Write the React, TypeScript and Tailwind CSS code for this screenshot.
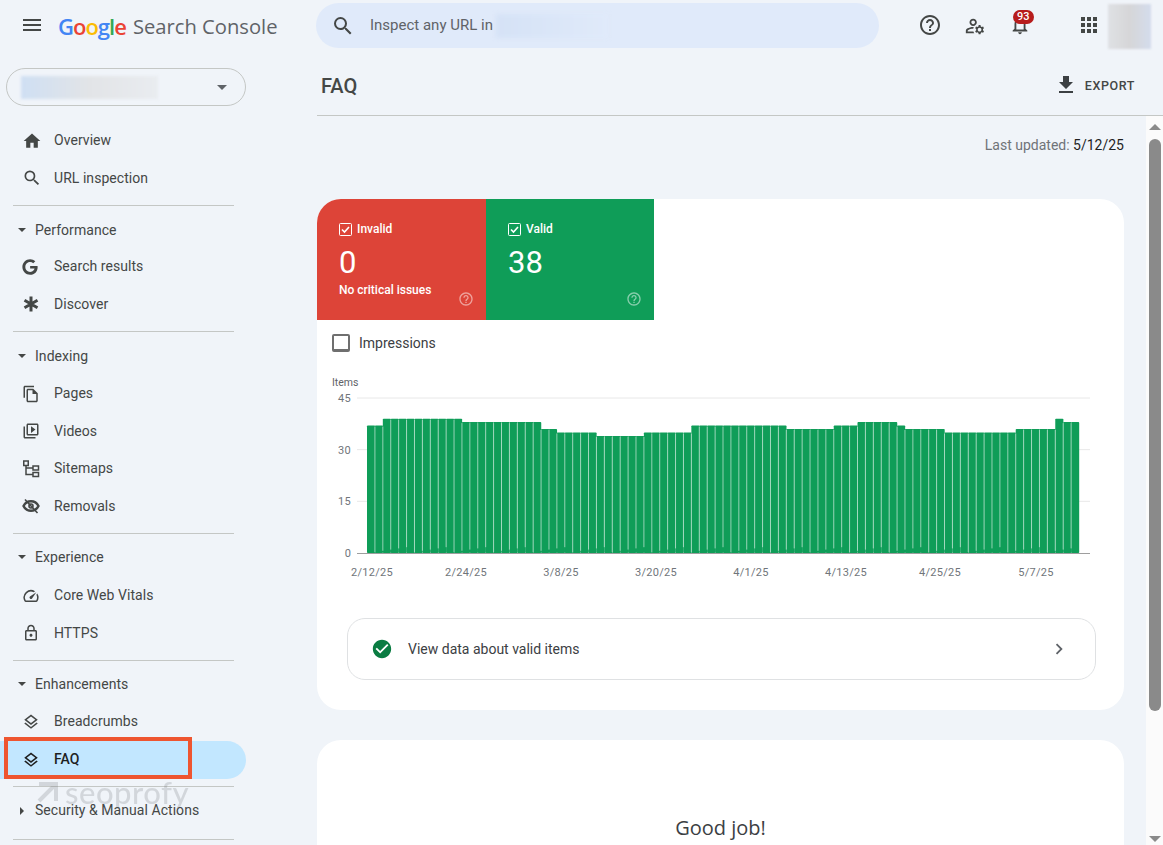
import type { ReactNode } from "react";
import {
  MdApps,
  MdCheckCircle,
  MdChevronRight,
  MdFileDownload,
  MdHelpOutline,
  MdHome,
  MdMenu,
  MdOutlineFileCopy,
  MdOutlineLayers,
  MdOutlineLock,
  MdOutlineManageAccounts,
  MdOutlineNotifications,
  MdOutlineSpeed,
  MdOutlineVideoLibrary,
  MdSearch,
} from "react-icons/md";
import { FaGoogle } from "react-icons/fa";

// value, how many days in a row
const runs: [number, number][] = [
  [37, 2], [39, 10], [38, 10], [36, 2], [35, 5], [34, 6], [35, 6], [37, 12], [36, 6],
  [37, 3], [38, 5], [37, 1], [36, 5], [35, 9], [36, 5], [39, 1], [38, 2],
];
const days = runs.flatMap(([v, n]) => Array.from({ length: n }, () => v));

const xLabels: [string, number][] = [
  ["2/12/25", 372], ["2/24/25", 466], ["3/8/25", 561], ["3/20/25", 656],
  ["4/1/25", 751], ["4/13/25", 846], ["4/25/25", 940], ["5/7/25", 1036],
];

function SitemapIcon() {
  return (
    <svg width="18" height="18" viewBox="0 0 18 18" fill="none" stroke="currentColor" strokeWidth="1.5">
      <rect x="1.75" y="1" width="4.5" height="4.5" />
      <rect x="11" y="6" width="5.5" height="4" />
      <rect x="11" y="12.5" width="5.5" height="4" />
      <path d="M4 5.5V14.5H11M4 8H11" />
    </svg>
  );
}

function DiscoverIcon() {
  return (
    <svg width="18" height="18" viewBox="0 0 18 18" fill="none" stroke="currentColor" strokeWidth="3">
      <path d="M9 1.5V16.5M2.5 5.2L15.5 12.8M15.5 5.2L2.5 12.8" />
    </svg>
  );
}

function RemovalsIcon() {
  return (
    <svg width="18" height="18" viewBox="0 0 18 18" fill="none" stroke="currentColor">
      <path d="M1.5 9C3.2 5.8 5.8 4.2 9 4.2S14.8 5.8 16.5 9C14.8 12.2 12.2 13.8 9 13.8S3.2 12.2 1.5 9Z" strokeWidth="2.4" />
      <circle cx="9" cy="9" r="2" strokeWidth="1.6" />
      <path d="M3 2.5L15.5 16" strokeWidth="1.6" />
    </svg>
  );
}

function NavItem({ icon, label }: { icon: ReactNode; label: string }) {
  return (
    <div className="flex h-[37.5px] items-center pl-[22px] text-[14px] tracking-[0.05px] text-[#444746]">
      <span className="flex w-[32px] items-center text-[#444746]">{icon}</span>
      {label}
    </div>
  );
}

function Section({ label, open = true }: { label: string; open?: boolean }) {
  return (
    <div className="flex h-[24px] items-center text-[14px] tracking-[0.05px] text-[#444746]">
      <span className="flex w-[35px] justify-center pl-[9px]">
        {open ? (
          <span className="h-0 w-0 border-x-[4px] border-t-[4px] border-x-transparent border-t-[#444746]" />
        ) : (
          <span className="h-0 w-0 border-y-[4px] border-l-[4px] border-y-transparent border-l-[#444746]" />
        )}
      </span>
      {label}
    </div>
  );
}

function Divider({ tight = false }: { tight?: boolean }) {
  return <div className={`ml-[13px] mt-[8px] h-px w-[221px] bg-[#c4c7c5] ${tight ? "mb-[11px]" : "mb-[12px]"}`} />;
}

function Sidebar() {
  return (
    <aside className="relative w-[317px] shrink-0">
      <div className="ml-[6px] mt-[18px] flex h-[38px] w-[240px] items-center justify-between rounded-full border border-[#c4c7c5] pl-[14px] pr-[18px]">
        <div className="h-[23px] w-[137px] bg-gradient-to-r from-[#cfdff3] via-[#e2e4e7] to-[#e9ecf0] blur-[1.5px]" />
        <span className="h-0 w-0 border-x-[5px] border-t-[5px] border-x-transparent border-t-[#5f6368]" />
      </div>
      <nav className="mt-[16px]">
        <NavItem icon={<MdHome size={20} />} label="Overview" />
        <NavItem icon={<MdSearch size={20} />} label="URL inspection" />
        <Divider />
        <Section label="Performance" />
        <div className="h-[6px]" />
        <NavItem icon={<FaGoogle size={16} />} label="Search results" />
        <NavItem icon={<DiscoverIcon />} label="Discover" />
        <Divider />
        <Section label="Indexing" />
        <div className="h-[7px]" />
        <NavItem icon={<MdOutlineFileCopy size={18} />} label="Pages" />
        <NavItem icon={<MdOutlineVideoLibrary size={18} />} label="Videos" />
        <NavItem icon={<SitemapIcon />} label="Sitemaps" />
        <NavItem icon={<RemovalsIcon />} label="Removals" />
        <Divider tight />
        <Section label="Experience" />
        <div className="h-[8px]" />
        <NavItem icon={<MdOutlineSpeed size={18} />} label="Core Web Vitals" />
        <NavItem icon={<MdOutlineLock size={18} />} label="HTTPS" />
        <Divider tight />
        <Section label="Enhancements" />
        <div className="h-[7px]" />
        <NavItem icon={<MdOutlineLayers size={18} />} label="Breadcrumbs" />
        <div className="relative h-[38px] w-[246px] rounded-r-full bg-[#c2e7ff]">
          <div className="flex h-full items-center pl-[22px] text-[14px] font-medium text-[#1f1f1f]">
            <span className="flex w-[32px] items-center"><MdOutlineLayers size={18} /></span>
            FAQ
          </div>
          <div className="absolute left-[4px] top-[-4px] h-[42px] w-[188px] border-[4px] border-[#ee5530]" />
        </div>
        <div className="-mt-px">
          <Divider />
        </div>
        <Section label="Security & Manual Actions" open={false} />
        <div className="h-[8px]" />
        <Divider />
      </nav>
      {/* watermark over the nav */}
      <div className="absolute left-[36px] top-[727px] flex items-center gap-[6px] text-[31px] leading-[30px] font-medium tracking-[0.5px] text-[#5f6368] opacity-20">
        <svg width="23" height="23" viewBox="0 0 23 23" fill="none" stroke="currentColor" strokeWidth="4">
          <path d="M3 3H20V20M20 3L3 20" />
        </svg>
        <span className="font-['Lato',sans-serif]">seoprofy</span>
      </div>
    </aside>
  );
}

function Topbar() {
  return (
    <header className="flex h-[50px] items-center">
      <div className="flex w-[316px] shrink-0 items-center pl-[20px]">
        <MdMenu size={24} className="text-[#444746]" />
        <span className="ml-[14px] mt-[2px] font-['Open_Sans',sans-serif] text-[22px] leading-none font-semibold tracking-[-1px]">
          <span className="text-[#4285f4]">G</span>
          <span className="text-[#ea4335]">o</span>
          <span className="text-[#fbbc05]">o</span>
          <span className="text-[#4285f4]">g</span>
          <span className="text-[#34a853]">l</span>
          <span className="text-[#ea4335]">e</span>
        </span>
        <span className="ml-[7px] mt-[2px] font-['Open_Sans',sans-serif] text-[20.2px] leading-none text-[#5f6368]">Search Console</span>
      </div>
      <div className="mt-[1px] flex h-[45px] w-[563px] items-center rounded-full bg-[#e0eafa] pl-[15px]">
        <MdSearch size={24} className="text-[#444746]" />
        <span className="ml-[15px] text-[15px] text-[#5f6368]">Inspect any URL in</span>
        <div className="ml-[3px] h-[24px] w-[112px] bg-gradient-to-r from-[#d5e2f6] to-[#e0eafa] blur-[2px]" />
      </div>
      <div className="ml-[39px] flex items-center text-[#444746]">
        <MdHelpOutline size={24} />
        <MdOutlineManageAccounts size={22} className="ml-[22px] mt-[2px]" />
        <div className="relative ml-[23px]">
          <MdOutlineNotifications size={22} />
          <span className="absolute left-[4px] top-[-4px] rounded-full bg-[#b71c1c] px-[4px] text-[11px] leading-[14px] font-medium text-white">93</span>
        </div>
        <MdApps size={24} className="ml-[46px]" />
        <div className="ml-[7px] mt-[3px] h-[45px] w-[43px] bg-gradient-to-r from-[#dfe1e4] via-[#d6d6d8] to-[#d4dcec] blur-[1px]" />
      </div>
    </header>
  );
}

function Tile({ label, value, note, bg }: { label: string; value: string; note?: string; bg: string }) {
  return (
    <div className={`relative h-[121px] px-[22px] pt-[22px] text-white ${bg}`}>
      <div className="flex items-center gap-[5px] text-[12px] leading-[16px] font-medium">
        <svg width="13" height="13" viewBox="0 0 13 13" fill="none" stroke="white">
          <rect x="0.5" y="0.5" width="12" height="12" rx="1" />
          <path d="M3 6.5L5.5 9L10 4" strokeWidth="1.6" />
        </svg>
        {label}
      </div>
      <div className="mt-[6px] text-[31px] leading-[40px]">{value}</div>
      {note && <div className="mt-[-1px] text-[12px] leading-[16px] font-medium">{note}</div>}
      <MdHelpOutline size={16} className="absolute right-[12px] bottom-[13px] text-white opacity-50" />
    </div>
  );
}

function Chart() {
  const pitch = 712 / days.length;
  const y = (v: number) => 553 - (v * 155) / 45;
  return (
    <svg className="block" width="807" height="215" viewBox="317 372 807 215">
      <text x="332" y="386" fontSize="10.5" fill="#5f6368">Items</text>
      {[45, 30, 15].map((v) => (
        <g key={v}>
          <line x1="357" x2="1090" y1={y(v)} y2={y(v)} stroke="#e8e8e8" />
          <text x="351" y={y(v) + 4} textAnchor="end" fontSize="11" letterSpacing="0.3" fill="#70757a">{v}</text>
        </g>
      ))}
      <text x="351" y="557" textAnchor="end" fontSize="11" fill="#70757a">0</text>
      {days.map((v, i) => (
        <rect key={i} x={367 + i * pitch} y={y(v)} width={pitch + 0.2} height={553 - y(v)} rx="0.8" fill="#0f9d58" />
      ))}
      {days.slice(1).map((v, i) => (
        <rect
          key={i}
          x={367 + (i + 1) * pitch - 0.5}
          y={Math.max(y(v), y(days[i])) + 1}
          width="1"
          height={553 - Math.max(y(v), y(days[i])) - 2 - (i % 5) * 1.2}
          fill="#ffffff"
          opacity="0.55"
        />
      ))}
      <line x1="357" x2="1090" y1="553.5" y2="553.5" stroke="#9e9e9e" />
      {xLabels.map(([t, x]) => (
        <text key={t} x={x} y="576" textAnchor="middle" fontSize="11" letterSpacing="0.3" fill="#70757a">{t}</text>
      ))}
    </svg>
  );
}

function Scrollbar() {
  return (
    <div className="flex w-[17px] shrink-0 flex-col items-center bg-[#fbfbfb]">
      <span className="mt-[8px] h-0 w-0 border-x-[6px] border-b-[6px] border-x-transparent border-b-[#8a8a8a]" />
      <div className="mt-[9px] ml-[1px] h-[572px] w-[12px] rounded-full bg-[#8a8a8a]" />
      <span className="mt-auto mb-[3px] h-0 w-0 border-x-[6px] border-t-[6px] border-x-transparent border-t-[#8a8a8a]" />
    </div>
  );
}

export default function App() {
  return (
    <div className="h-[845px] w-[1163px] overflow-hidden bg-[#f0f4f9] font-['Roboto',sans-serif]">
      <Topbar />
      <div className="flex h-[795px]">
        <Sidebar />
        <main className="flex min-w-0 flex-1 flex-col">
          <div className="flex h-[66px] shrink-0 items-center justify-between border-b border-[#c4c7c5] pr-[28px] pt-[7px]">
            <h1 className="pl-[4px] text-[20px] font-medium text-[#444746]">FAQ</h1>
            <div className="flex items-center gap-[7px] text-[12.5px] font-medium tracking-[0.6px] text-[#444746]">
              <MdFileDownload size={24} className="mt-[-3px] text-[#3c4043]" />
              EXPORT
            </div>
          </div>
          <div className="flex min-h-0 flex-1">
            <div className="min-w-0 flex-1 overflow-hidden">
              <p className="pr-[22px] pt-[20px] text-right text-[14px] leading-[18px] text-[#6f7378]">
                Last updated: <span className="text-[#1f1f1f]">5/12/25</span>
              </p>
              <section className="mt-[45px] h-[511px] w-[807px] overflow-hidden rounded-[24px] bg-white">
                <div className="flex">
                  <Tile label="Invalid" value="0" note="No critical issues" bg="w-[169px] bg-[#dd4438]" />
                  <Tile label="Valid" value="38" bg="w-[168px] bg-[#0f9d58]" />
                </div>
                <label className="mt-[14px] flex items-center pl-[15px] text-[14px] leading-[18px] text-[#3c4043]">
                  <span className="h-[18px] w-[18px] rounded-[2px] border-2 border-b-[3px] border-[#6f6f6f]" />
                  <span className="ml-[9px]">Impressions</span>
                </label>
                <div className="mt-[20px]">
                  <Chart />
                </div>
                <div className="ml-[30px] mt-[31px] flex h-[62px] w-[749px] items-center rounded-[18px] border border-[#dfe1e3] pl-[23px] pr-[25px]">
                  <MdCheckCircle size={22} className="text-[#0a7c42]" />
                  <span className="ml-[15px] text-[14px] text-[#3c4043]">View data about valid items</span>
                  <MdChevronRight size={22} className="ml-auto text-[#5f6368]" />
                </div>
              </section>
              <section className="mt-[30px] h-[300px] w-[807px] rounded-[24px] bg-white pt-[74px] text-center font-['Open_Sans',sans-serif] text-[20px] leading-[28px] text-[#3c4043]">
                Good job!
              </section>
            </div>
            <Scrollbar />
          </div>
        </main>
      </div>
    </div>
  );
}
